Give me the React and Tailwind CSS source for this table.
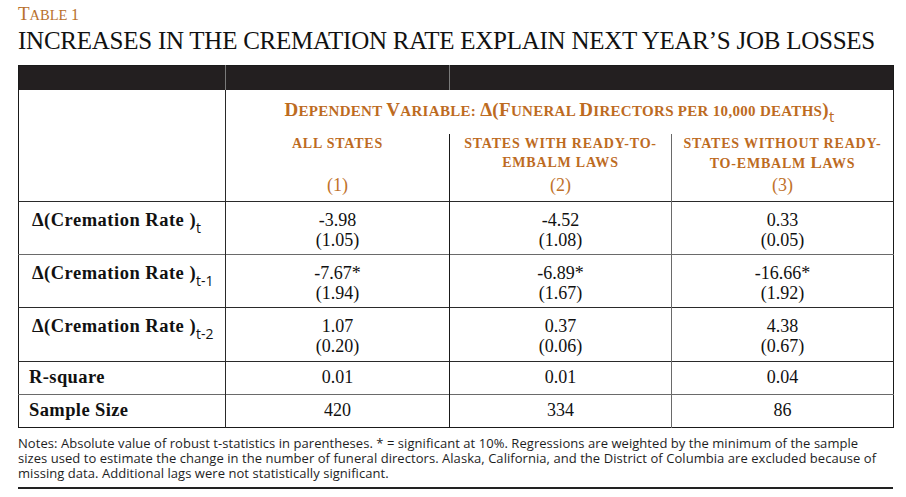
import React from 'react';

const serif = "font-['Liberation_Serif','Times_New_Roman',serif]";
const sans = "font-['Open_Sans','Liberation_Sans',sans-serif]";

const rows = [
  { sub: 't', a: ['-3.98', '(1.05)'], b: ['-4.52', '(1.08)'], c: ['0.33', '(0.05)'], line: 'border-[#6a6a6a]', h: 'h-[53px]' },
  { sub: 't-1', a: ['-7.67*', '(1.94)'], b: ['-6.89*', '(1.67)'], c: ['-16.66*', '(1.92)'], line: 'border-[#2a2a2a]', h: 'h-[53px]' },
  { sub: 't-2', a: ['1.07', '(0.20)'], b: ['0.37', '(0.06)'], c: ['4.38', '(0.67)'], line: 'border-[#2a2a2a]', h: 'h-[54px]' },
];

const Big = ({ children }) => <span className="text-[19px]">{children}</span>;

const ColHead = ({ lines, num }) => (
  <div className="flex h-[67px] flex-col items-center justify-between pb-[5px] text-center">
    <div className="text-[14px] font-bold leading-[19px] tracking-[0.8px] text-[#bd6b1f]">{lines}</div>
    <div className="text-[18px] leading-[22px] text-[#c0722b]">({num})</div>
  </div>
);

const Num = ({ vals, border }) => (
  <td className={`border-l ${border} pt-[8px] align-top text-center text-[18px] leading-[20px] text-[#111]`}>
    <div>{vals[0]}</div>
    <div>{vals[1]}</div>
  </td>
);

export default function App() {
  return (
    <div className={`w-[906px] h-[497px] bg-white pt-[3px] ${serif}`}>
      <div className="ml-[18px] h-[22px] leading-[22px] text-[#b8702c]">
        <span className="text-[19px]">T</span>
        <span className="text-[14.5px]">ABLE </span>
        <span className="text-[16px]">1</span>
      </div>
      <h1 className="ml-[18px] mt-[1px] whitespace-nowrap text-[25px] leading-[30px] tracking-[-0.25px] text-[#111]">
        INCREASES IN THE CREMATION RATE EXPLAIN NEXT YEAR’S JOB LOSSES
      </h1>

      <table className="ml-[18px] mt-[9px] w-[875px] table-fixed border-collapse border-[1.5px] border-[#1a1a1a]">
        <colgroup>
          <col className="w-[207px]" />
          <col className="w-[224px]" />
          <col className="w-[222px]" />
          <col className="w-[222px]" />
        </colgroup>
        <tbody>
          <tr className="h-[24px] bg-[#231f20]">
            <td className="border-r border-[#7a7a7a]" />
            <td className="border-r border-[#7a7a7a]" />
            <td colSpan={2} />
          </tr>
          <tr>
            <td rowSpan={2} className="border-r border-b border-[#2a2a2a]" />
            <td colSpan={3} className="h-[44px] pt-[9px] align-top text-center text-[15px] font-bold leading-[22px] tracking-[0.3px] text-[#bd6b1f]">
              <Big>D</Big>EPENDENT <Big>V</Big>ARIABLE: <Big>Δ(F</Big>UNERAL <Big>D</Big>IRECTORS PER 10,000 DEATHS<Big>)</Big>
              <span className={`${sans} align-[-6px] text-[15px] font-normal`}>t</span>
            </td>
          </tr>
          <tr className="border-b border-[#2a2a2a]">
            <td className="border-r border-[#1a1a1a] align-top">
              <ColHead lines={<div>ALL STATES</div>} num="1" />
            </td>
            <td className="border-r border-[#6a6a6a] align-top">
              <ColHead lines={<><div>STATES WITH READY-TO-</div><div>EMBALM LAWS</div></>} num="2" />
            </td>
            <td className="align-top">
              <ColHead
                lines={<><div>STATES WITHOUT READY-</div><div>TO-EMBALM <span className="text-[17px]">L</span>AWS</div></>}
                num="3"
              />
            </td>
          </tr>

          {rows.map((r) => (
            <tr key={r.sub} className={`${r.h} border-b ${r.line}`}>
              <td className="whitespace-nowrap pl-[13px] pt-[8px] align-top text-[18.5px] font-bold leading-[20px] tracking-[0.5px] text-[#111]">
                Δ(Cremation Rate )
                <span className={`${sans} align-[-7px] text-[14px] font-normal tracking-normal`}>{r.sub}</span>
              </td>
              <Num vals={r.a} border="border-[#2a2a2a]" />
              <Num vals={r.b} border="border-[#1a1a1a]" />
              <Num vals={r.c} border="border-[#6a6a6a]" />
            </tr>
          ))}

          <tr className="h-[33px] border-b border-[#6a6a6a] text-[18px] text-[#111]">
            <td className="pl-[10px] text-[18.5px] font-bold tracking-[0.4px]">R-square</td>
            <td className="border-l border-[#2a2a2a] text-center">0.01</td>
            <td className="border-l border-[#1a1a1a] text-center">0.01</td>
            <td className="border-l border-[#6a6a6a] text-center">0.04</td>
          </tr>
          <tr className="h-[33px] text-[18px] text-[#111]">
            <td className="pl-[10px] text-[18.5px] font-bold tracking-[0.4px]">Sample Size</td>
            <td className="border-l border-[#2a2a2a] text-center">420</td>
            <td className="border-l border-[#1a1a1a] text-center">334</td>
            <td className="border-l border-[#6a6a6a] text-center">86</td>
          </tr>
        </tbody>
      </table>

      <div className={`ml-[18px] mt-[8px] w-[880px] whitespace-nowrap text-[13px] leading-[15px] tracking-[0.05px] text-[#1e1e1e] ${sans}`}>
        <div className="h-[15px]">
          Notes: Absolute value of robust t-statistics in parentheses. * = significant at 10%. Regressions are weighted by the minimum of the sample
        </div>
        <div className="h-[15px]">
          sizes used to estimate the change in the number of funeral directors. Alaska, California, and the District of Columbia are excluded because of
        </div>
        <div className="h-[15px]">missing data. Additional lags were not statistically significant.</div>
      </div>
      <div className="ml-[18px] mt-[6px] h-[2px] w-[875px] bg-[#222]" />
    </div>
  );
}
